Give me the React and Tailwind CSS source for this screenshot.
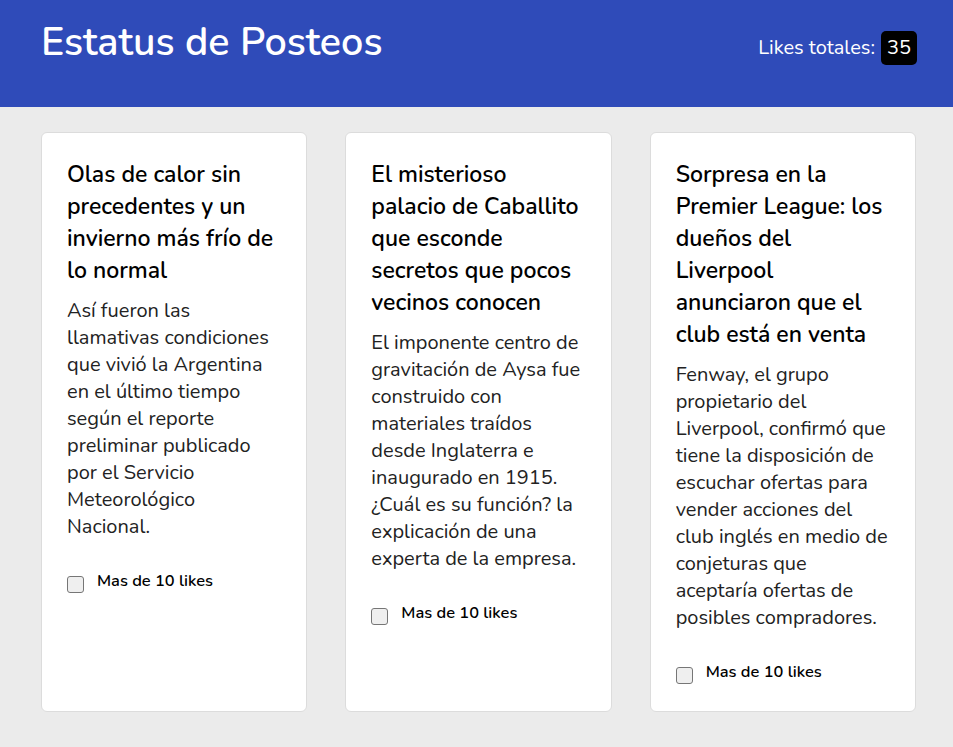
const posts = [
  {
    title: 'Olas de calor sin precedentes y un invierno más frío de lo normal',
    body: 'Así fueron las llamativas condiciones que vivió la Argentina en el último tiempo según el reporte preliminar publicado por el Servicio Meteorológico Nacional.',
  },
  {
    title: 'El misterioso palacio de Caballito que esconde secretos que pocos vecinos conocen',
    body: 'El imponente centro de gravitación de Aysa fue construido con materiales traídos desde Inglaterra e inaugurado en 1915. ¿Cuál es su función? la explicación de una experta de la empresa.',
  },
  {
    title: 'Sorpresa en la Premier League: los dueños del Liverpool anunciaron que el club está en venta',
    body: 'Fenway, el grupo propietario del Liverpool, confirmó que tiene la disposición de escuchar ofertas para vender acciones del club inglés en medio de conjeturas que aceptaría ofertas de posibles compradores.',
  },
]

function PostCard({ post }) {
  return (
    <div className="bg-white border border-[#dcdcdc] rounded-md px-[25px] pt-[26px] pb-[27px]">
      <h2 className="text-[23px] leading-[32px] font-semibold text-black">{post.title}</h2>
      <p className="mt-[10px] text-[20px] leading-[27px] text-[#222]">{post.body}</p>
      <label className="mt-[30px] flex items-start gap-[13px]">
        <span className="mt-[6px] w-[17px] h-[17px] shrink-0 rounded-[3px] border border-[#767676] bg-[#efefef]" />
        <span className="text-[16.4px] leading-[22px] font-semibold text-black">Mas de 10 likes</span>
      </label>
    </div>
  )
}

export default function App() {
  return (
    <div className="min-h-[747px] bg-[#ebebeb] font-['Nunito',Lato,sans-serif]">
      {/* Header */}
      <header className="bg-[#2f4bb9] h-[107px] pl-[41px] pr-[36px] flex items-start justify-between">
        <h1 className="pt-[18px] text-[39.5px] leading-[48px] font-semibold text-white">Estatus de Posteos</h1>
        <div className="pt-[31px] flex items-center gap-[6px]">
          <span className="text-[20px] text-white">Likes totales:</span>
          <span className="bg-black text-white text-[20px] leading-[34px] h-[34px] w-[36px] text-center rounded-[5px]">35</span>
        </div>
      </header>

      {/* Cards */}
      <main className="grid grid-cols-3 gap-[38px] pl-[41px] pr-[37px] pt-[25px] pb-[36px]">
        {posts.map((post, i) => (
          <PostCard key={i} post={post} />
        ))}
      </main>
    </div>
  )
}
